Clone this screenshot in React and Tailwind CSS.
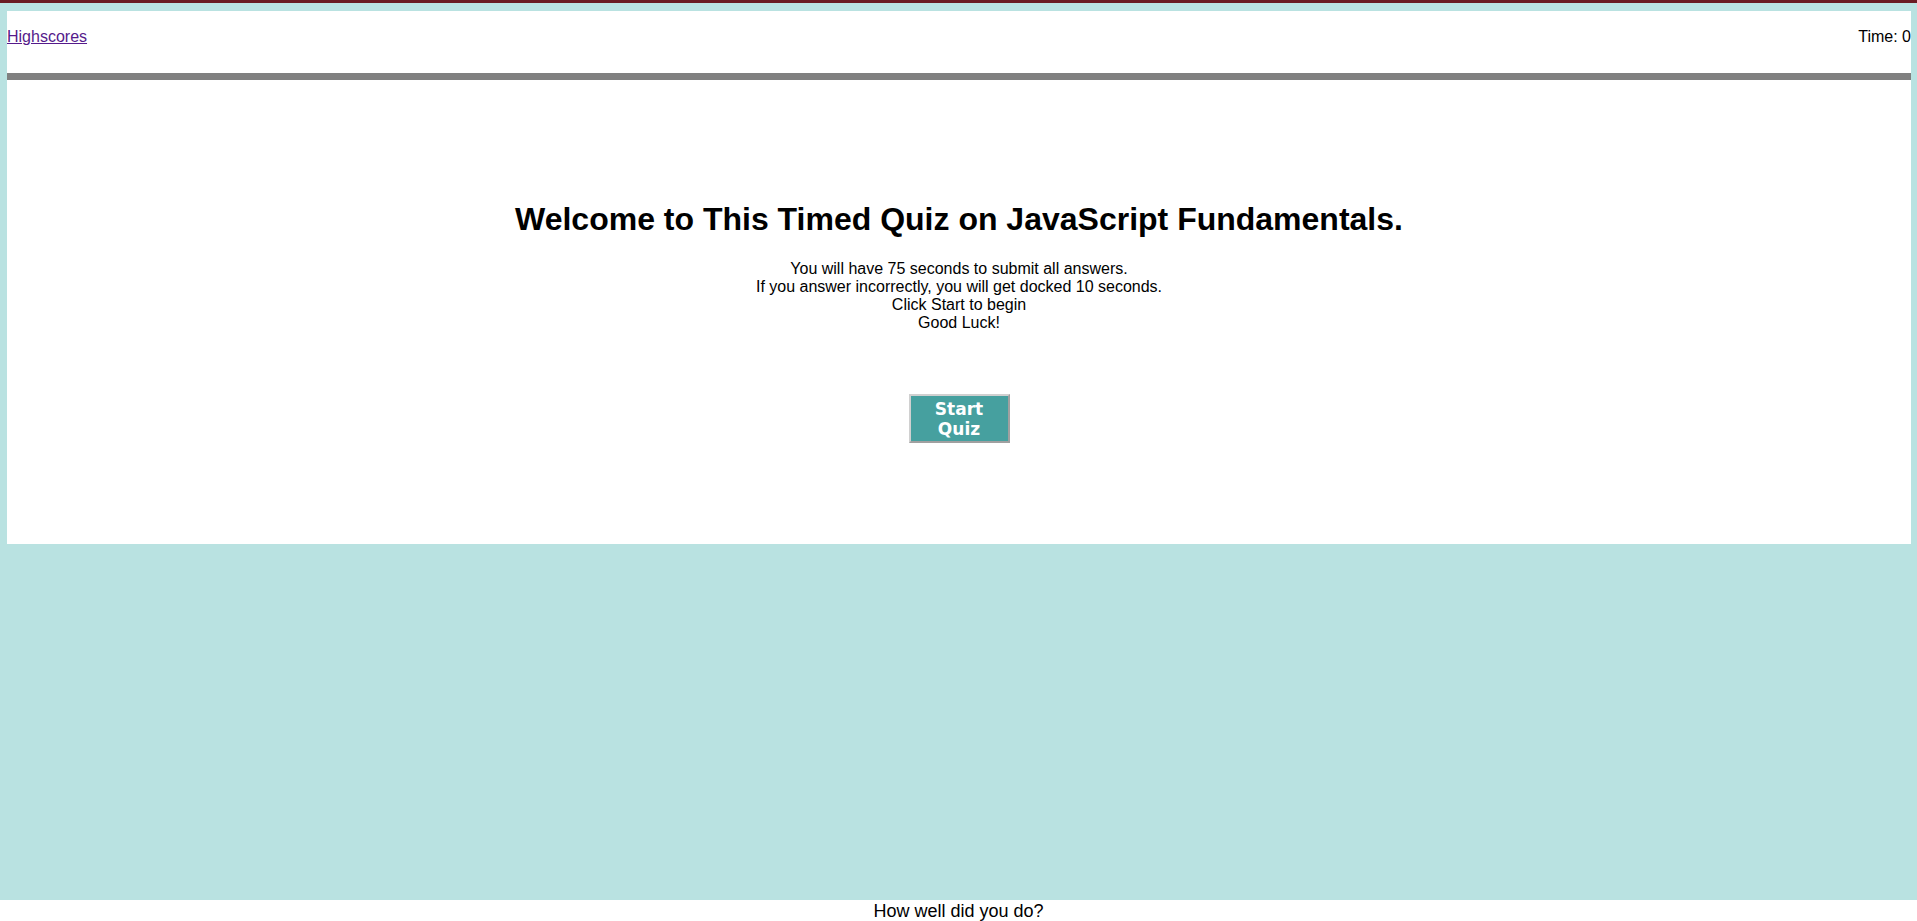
import React from "react";

export default function App() {
  return (
    <div
      className="min-h-screen bg-[#b9e2e1] border-t-[3px] border-[#6a1b22] flex flex-col text-black"
      style={{ fontFamily: '"Liberation Sans", Arial, sans-serif' }}
    >
      <div className="mt-[8px] ml-[7px] mr-[6px] bg-white">
        <header className="h-[62px] pt-[17px] flex justify-between items-start text-[16px] leading-[18px]">
          <a href="#" className="text-[#551a8b] underline">
            Highscores
          </a>
          <span>Time: 0</span>
        </header>
        <div className="h-[7px] bg-[#808080]" />
        <main className="pt-[121px] pb-[101px] flex flex-col items-center text-center">
          <h1 className="text-[32px] leading-[37px] font-bold">
            Welcome to This Timed Quiz on JavaScript Fundamentals.
          </h1>
          <p className="mt-[22px] text-[16px] leading-[18px]">
            You will have 75 seconds to submit all answers.
            <br />
            If you answer incorrectly, you will get docked 10 seconds.
            <br />
            Click Start to begin
            <br />
            Good Luck!
          </p>
          <button
            className="mt-[62px] w-[101px] h-[49px] bg-[#46a09f] text-white font-bold text-[17px] leading-[20px] border-2 border-t-[#d0d0d0] border-l-[#d0d0d0] border-r-[#a0a0a0] border-b-[#a0a0a0] px-[8px]"
            style={{ fontFamily: '"DejaVu Sans", Verdana, sans-serif' }}
          >
            Start Quiz
          </button>
        </main>
      </div>
      <div className="h-[356px]" />
      <footer className="bg-white pt-[1px] pb-[10px] text-center text-[18px] leading-[21px]">
        How well did you do?
      </footer>
    </div>
  );
}
